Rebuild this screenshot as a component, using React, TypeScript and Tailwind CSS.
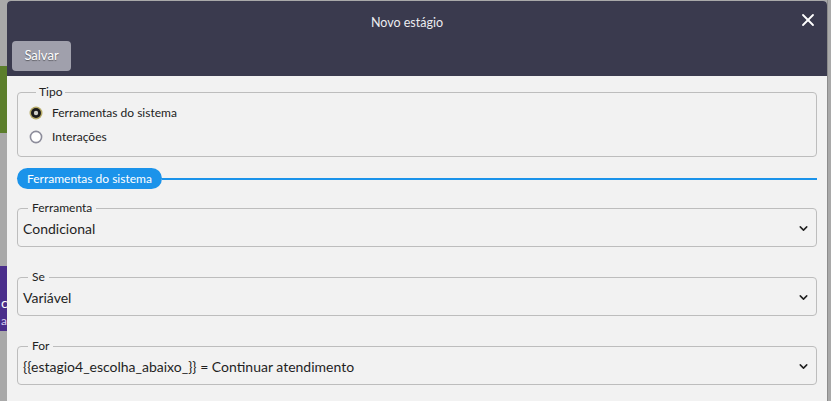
import { X, ChevronDown } from 'lucide-react'

const FIELDS = [
  { label: 'Ferramenta', value: 'Condicional' },
  { label: 'Se', value: 'Variável' },
  { label: 'For', value: '{{estagio4_escolha_abaixo_}} = Continuar atendimento' },
]

function Radio({ checked }: { checked: boolean }) {
  return (
    <svg width="14" height="14" viewBox="0 0 14 14" className="shrink-0">
      {checked ? (
        <>
          <circle cx="7" cy="7" r="6.5" fill="#b7ab68" />
          <circle cx="7" cy="7" r="5" fill="#1c1c1c" />
          <circle cx="7" cy="7" r="2.2" fill="#cfcfc8" />
        </>
      ) : (
        <circle cx="7" cy="7" r="5.6" fill="#ffffff" stroke="#8d8d9b" strokeWidth="1.6" />
      )}
    </svg>
  )
}

function SelectField({ label, value }: { label: string; value: string }) {
  return (
    <fieldset className="border border-[#bdbdbd] rounded-[4px] pl-[5px] pr-[6px] pb-[4px]">
      <legend className="ml-[5px] px-[4px] text-[12px] leading-[14px] text-[#222]">{label}</legend>
      <div className="h-[27px] flex items-center justify-between">
        <span className="text-[14px] text-[#1f1f1f]">{value}</span>
        <ChevronDown size={13} strokeWidth={2.8} className="text-[#222]" />
      </div>
    </fieldset>
  )
}

export default function App() {
  return (
    <div className="relative h-[401px] w-[831px] overflow-hidden bg-[#a9a9a9]" style={{ fontFamily: 'Lato, "Open Sans", sans-serif' }}>
      {/* page behind the modal */}
      <div className="flex flex-col w-[120px]">
        <div className="h-[66px]" />
        <div className="h-[67px] bg-[#5b7e2b]" />
        <div className="h-[133px]" />
        <div className="h-[65px] bg-[#4a2e8b] text-white text-[14px] pt-[28px] pl-[1px] leading-[18px]">
          <div>ci</div>
          <div className="text-[12px] text-[#d8d0f0]">a .</div>
        </div>
      </div>
      <div className="absolute top-0 bottom-0 right-[3px] w-px bg-[#8c8c8c]" />

      {/* modal */}
      <div className="absolute left-[7px] top-[1px] w-[820px] bottom-0 rounded-t-[4px] overflow-hidden bg-[#f2f2f2] flex flex-col">
        <div className="bg-[#3a3a4e] h-[75px] flex flex-col">
          <div className="relative h-[40px] pt-[5px] pr-[20px] flex items-center justify-center">
            <span className="text-[12.5px] text-[#ececf0]">Novo estágio</span>
            <X size={20} strokeWidth={2.2} className="absolute right-[9px] top-[9px] text-white" />
          </div>
          <div className="pl-[5px]">
            <button className="w-[59px] h-[30px] rounded-[4px] bg-[#a0a0ac] text-white text-[13px] [text-shadow:0_1px_1px_rgba(0,0,0,0.45)]">
              Salvar
            </button>
          </div>
        </div>

        <div className="px-[10px] pt-[9px] flex flex-col">
          <fieldset className="border border-[#bdbdbd] rounded-[4px] pl-[11px] pt-[2px] pb-[7px]">
            <legend className="ml-[7px] px-[3px] text-[12px] leading-[14px] text-[#222]">Tipo</legend>
            <label className="h-6 flex items-center gap-[9px] text-[12px] text-[#222]">
              <Radio checked />
              Ferramentas do sistema
            </label>
            <label className="h-6 flex items-center gap-[9px] text-[12px] text-[#222]">
              <Radio checked={false} />
              Interações
            </label>
          </fieldset>

          <div className="mt-[11px] flex items-center">
            <span className="h-[21px] px-[10px] rounded-full bg-[#1b93ea] text-white text-[12px] flex items-center">
              Ferramentas do sistema
            </span>
            <div className="flex-1 h-[2px] bg-[#1b93ea]" />
          </div>

          <div className="mt-[12px] flex flex-col gap-[23px]">
            {FIELDS.map(f => (
              <SelectField key={f.label} label={f.label} value={f.value} />
            ))}
          </div>
        </div>
      </div>
    </div>
  )
}
